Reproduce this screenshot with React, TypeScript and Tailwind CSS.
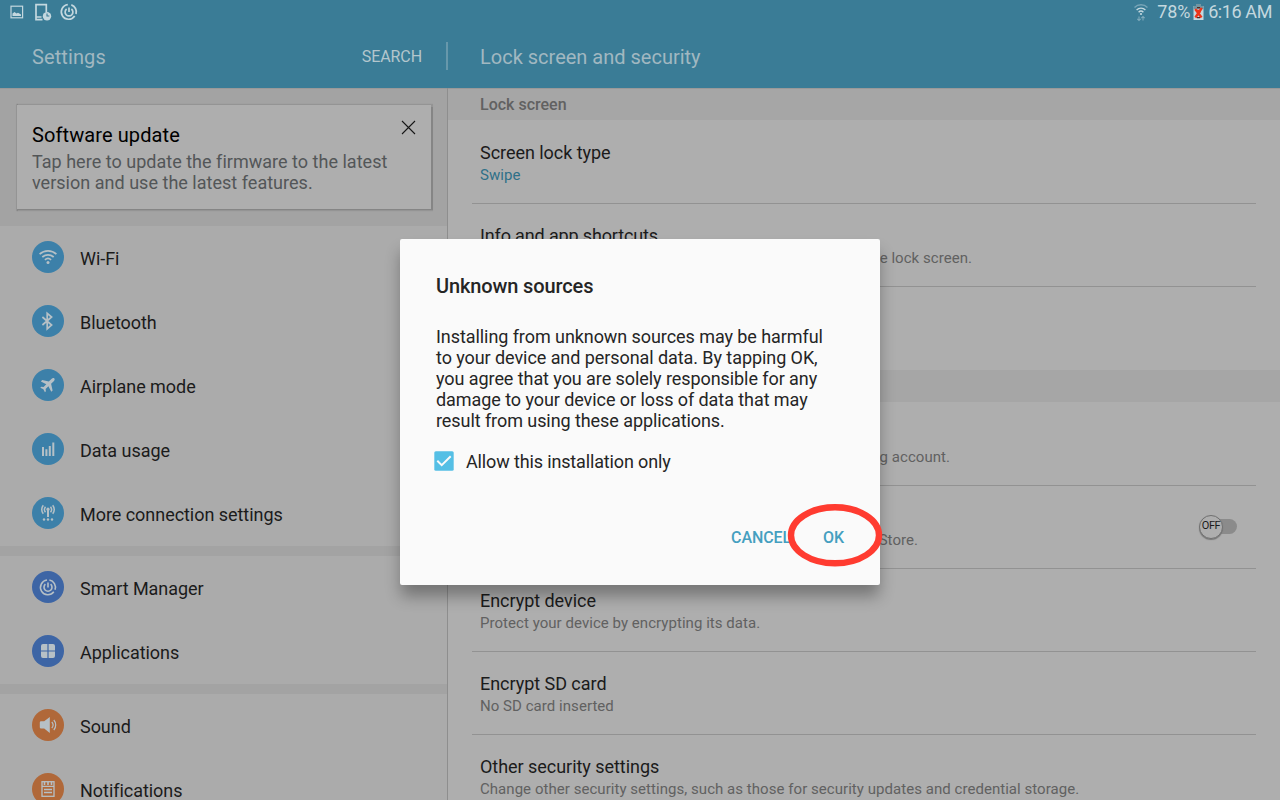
import React from "react";

type IconName = "wifi" | "bluetooth" | "plane" | "data" | "antenna" | "manager" | "apps" | "sound" | "notes";

function Glyph({ name }: { name: IconName }) {
  const line = { fill: "none", stroke: "#b6c0c6", strokeWidth: 1.7 };
  const solid = { fill: "#b6c0c6" };
  return (
    <svg width="32" height="32" viewBox="0 0 32 32">
      {name === "wifi" && (
        <g {...line}>
          <path d="M7.6 13.2a12.4 12.4 0 0 1 16.8 0M10.3 16a8.6 8.6 0 0 1 11.4 0M12.9 18.8a4.8 4.8 0 0 1 6.2 0" />
          <circle cx="16" cy="21.5" r="1.5" {...solid} stroke="none" />
        </g>
      )}
      {name === "bluetooth" && <path d="M10.4 12l9.2 8-4.4 3.8V8.3l4.4 3.7-9.2 8" {...line} />}
      {name === "plane" && (
        <path
          d="M22.2 9.2c-.8-.6-1.8-.2-2.5.5l-2.9 2.9-6.6-1.5-1.3 1.3 5.4 2.8-2.7 2.9-2.3-.4-1 1 3.1 1.5 1.5 3.1 1-1-.3-2.3 2.8-2.7 2.9 5.4 1.3-1.3-1.5-6.6 2.9-2.9c.7-.7 1-1.8.2-2.7Z"
          {...solid}
        />
      )}
      {name === "data" && (
        <path d="M10 14h2v9h-2zM13.4 16.3h2V23h-2zM16.8 13h2v10h-2zM20.3 9.5h2V23h-2z" {...solid} />
      )}
      {name === "antenna" && (
        <g {...line} strokeWidth="1.5">
          <path d="M11.3 8.3a7 7 0 0 0 0 8.4M20.7 8.3a7 7 0 0 1 0 8.4M13.5 9.7a4.5 4.5 0 0 0 0 5.6M18.5 9.7a4.5 4.5 0 0 1 0 5.6" />
          <path d="M16 12.5V20" strokeWidth="2" />
          <g {...solid} stroke="none">
            <circle cx="16" cy="12.2" r="1.6" />
            <circle cx="12" cy="22.5" r="1.2" />
            <circle cx="16" cy="22.5" r="1.2" />
            <circle cx="20" cy="22.5" r="1.2" />
          </g>
        </g>
      )}
      {name === "manager" && (
        <g {...line} strokeWidth="1.6">
          <path d="M15 9a7.4 7.4 0 1 0 6.8 11.8M23 18.7A7.4 7.4 0 0 0 17.4 9" />
          <path d="M13.4 13.2a4 4 0 1 0 5.2 0M16 11.5v5" />
        </g>
      )}
      {name === "apps" && (
        <g {...solid}>
          <path d="M11 9h4.4v6.4H9V11a2 2 0 0 1 2-2ZM16.6 9H21a2 2 0 0 1 2 2v4.4h-6.4zM9 16.6h6.4V23H11a2 2 0 0 1-2-2zM16.6 16.6H23V21a2 2 0 0 1-2 2h-4.4z" />
        </g>
      )}
      {name === "sound" && (
        <g {...line} strokeWidth="1.2">
          <path d="M9 12.2h3.2L17.8 8v16l-5.6-4.5H9a1.2 1.2 0 0 1-1.2-1.2v-4.9A1.2 1.2 0 0 1 9 12.2Z" {...solid} stroke="none" />
          <path d="M19.8 13a4.5 4.5 0 0 1 0 6M21.8 11a7.5 7.5 0 0 1 0 10" />
        </g>
      )}
      {name === "notes" && (
        <g {...line} strokeWidth="1.3">
          <rect x="10" y="8.7" width="12" height="14.6" />
          <path d="M10 13.3h12M12 16.5h8M12 19.5h8" />
          <path d="M12.5 9v3M16 9v3M19.5 9v3" strokeWidth="1.6" />
        </g>
      )}
    </svg>
  );
}

function MenuItem({ icon, color, label }: { icon: IconName; color: string; label: string }) {
  return (
    <div className="flex h-16 shrink-0 items-center pl-8">
      <div className={`mb-0.5 h-8 w-8 rounded-full ${color}`}>
        <Glyph name={icon} />
      </div>
      <span className="ml-4 mt-0.5 text-[18px] leading-6 tracking-[-0.04px] text-[#1b1b1b]">{label}</span>
    </div>
  );
}

function Gap() {
  return <div className="h-2.5 shrink-0 bg-[#a3a3a3]" />;
}

type SettingProps = {
  title?: string;
  titleClass?: string;
  detail?: string;
  detailClass?: string;
  last?: boolean;
  children?: React.ReactNode;
};

function Setting({
  title,
  titleClass = "tracking-[-0.04px]",
  detail,
  detailClass = "text-[#616161]",
  last,
  children,
}: SettingProps) {
  return (
    <div
      className={`ml-6 mr-6 flex h-[83px] shrink-0 items-center justify-between border-b pl-2 pr-[17px] ${
        last ? "border-transparent" : "border-[#929292]"
      }`}
    >
      <div className="pt-px">
        <div className={`h-6 whitespace-nowrap text-[18px] leading-6 text-[#1b1b1b] ${titleClass}`}>{title}</div>
        {detail && (
          <div className={`whitespace-nowrap text-[15px] leading-5 tracking-[0.045px] ${detailClass}`}>{detail}</div>
        )}
      </div>
      {children}
    </div>
  );
}

function StatusBar() {
  return (
    <div className="flex h-6 shrink-0 items-center justify-between pl-2 pr-2 text-[#c4d8df]">
      <svg width="76" height="24" viewBox="8 0 76 24" fill="none" stroke="#c4d8df">
        <rect x="11" y="6.2" width="11.6" height="11.6" strokeWidth="1.2" />
        <path d="M12.5 16v-2.6l2-1.4 2 1.6 1.5-.8 3 1.8V16z" fill="#c4d8df" stroke="none" />
        <path d="M46.3 12V4.6H36v15h6.5M36 17h5.5" strokeWidth="1.7" />
        <circle cx="47" cy="16.2" r="4.2" fill="#c4d8df" stroke="none" />
        <path d="M47 13.5V16h2.3" stroke="#3a7c96" strokeWidth="1.1" />
        <path d="M67.8 4.7a7.3 7.3 0 1 0 6.9 11.3M76 14a7.3 7.3 0 0 0-4.7-9.1" strokeWidth="1.7" />
        <path d="M66.6 9a3.9 3.9 0 1 0 4.8 0M69 7.5V12" strokeWidth="1.7" />
      </svg>
      <div className="flex items-center">
        <svg width="16" height="20" viewBox="0 0 16 20" fill="none" stroke="#c4d8df" strokeWidth="1.4">
          <path d="M1.5 5.5a9.2 9.2 0 0 1 13 0" opacity=".45" />
          <path d="M3.6 7.9a6.3 6.3 0 0 1 8.8 0M5.6 10.2a3.5 3.5 0 0 1 4.8 0" />
          <circle cx="8" cy="12" r="1.1" fill="#c4d8df" stroke="none" />
          <path d="M6 18.5v-4M4.3 16.8 6 18.5l1.7-1.7M10 14.5v4M8.3 16.2l1.7-1.7 1.7 1.7" opacity=".5" strokeWidth="1.1" />
        </svg>
        <span className="ml-2 text-[18px] leading-6 tracking-[-0.2px]">78%</span>
        <svg className="ml-[3px]" width="11" height="18" viewBox="0 0 11 18">
          <path d="M3 1h5v2h2.5v14H.5V3H3z" fill="#c4d8df" />
          <path d="M3 1h5v2h2.5v3H.5V3H3z" fill="#7296a2" />
          <path d="m2.2 6 6.3 8.5M8.8 5 2.4 14.5M3 7.5l5 1" stroke="#ed3418" strokeWidth="2.4" />
          <path d="M4 4.6h3M4 14.6h3" stroke="#542720" strokeWidth="1.2" />
        </svg>
        <span className="ml-1 text-[18px] leading-6 tracking-[-0.4px]">6:16 AM</span>
      </div>
    </div>
  );
}

function Dialog() {
  return (
    <div className="absolute left-[400px] top-[239px] flex h-[346px] w-[480px] flex-col rounded-[2px] bg-[#fafafa] px-9 pt-[34px] text-[#252525] shadow-[0_12px_16px_-1px_rgba(0,0,0,0.33)]">
      <h2 className="text-[20px] font-medium leading-[26px] tracking-[-0.12px]">Unknown sources</h2>
      <p className="mt-[27px] whitespace-nowrap text-[18px] leading-[21px] tracking-[-0.07px]">
        Installing from unknown sources may be harmful
        <br />
        to your device and personal data. By tapping OK,
        <br />
        you agree that you are solely responsible for any
        <br />
        damage to your device or loss of data that may
        <br />
        result from using these applications.
      </p>
      <label className="-ml-0.5 mt-[19px] flex h-6 items-center">
        <svg className="mb-[3px]" width="20" height="20" viewBox="0 0 20 20">
          <rect x=".3" y=".3" width="19.4" height="19.4" rx="1.5" fill="#55bfe5" />
          <path d="m3.3 9.8 4.4 4.3 9-8.8" fill="none" stroke="#fafafa" strokeWidth="2" />
        </svg>
        <span className="ml-3 text-[18px] leading-6 tracking-[-0.14px]">Allow this installation only</span>
      </label>
      <div className="mt-[52px] flex justify-end text-[16px] font-medium leading-6 tracking-[-0.1px] text-[#459fc0]">
        <span className="w-[92px]">CANCEL</span>
        <span>OK</span>
      </div>
      <svg className="absolute left-[386px] top-[263px]" width="98" height="66" viewBox="0 0 98 66">
        <ellipse cx="49" cy="33.3" rx="44" ry="28" fill="none" stroke="#ff3b30" strokeWidth="6.4" />
      </svg>
    </div>
  );
}

export default function App() {
  return (
    <div className="relative flex h-[800px] w-[1280px] flex-col overflow-hidden bg-[#aeaeae] font-[Roboto,sans-serif]">
      <header className="flex h-[88px] shrink-0 flex-col bg-[#3a7c96]">
        <StatusBar />
        <div className="flex h-16 items-center pb-0.5 text-[20px] text-[#a1b8c1]">
          <div className="flex w-[446px] items-center justify-between pl-8 pr-6">
            <span className="mt-1 tracking-[0.1px]">Settings</span>
            <span className="mt-1 text-[16px] tracking-[-0.08px] text-[#b3c6cd]">SEARCH</span>
          </div>
          <div className="mt-0.5 h-7 w-0.5 bg-[#6798ab]" />
          <span className="ml-8 mt-1">Lock screen and security</span>
        </div>
      </header>
      <div className="flex min-h-0 flex-1">
        <aside className="flex w-[448px] shrink-0 flex-col overflow-hidden border-r border-[#8e8e8e] bg-[#ababab]">
          <div className="h-[138px] shrink-0 border-t border-[#999999] bg-[#a3a3a3] pl-[17px] pr-4 pt-4">
            <div className="flex h-[104px] justify-between bg-[#aeaeae] pl-[15px] pr-[15px] pt-[18px] shadow-[0_0.5px_1px_1.5px_#858585]">
              <div>
                <div className="text-[20px] leading-6 tracking-[0.1px] text-black">Software update</div>
                <p className="mt-1 whitespace-nowrap text-[18px] leading-[21px] tracking-[0.02px] text-[#535658]">
                  Tap here to update the firmware to the latest
                  <br />
                  version and use the latest features.
                </p>
              </div>
              <svg className="-mt-[3px]" width="15" height="15" viewBox="0 0 15 15">
                <path d="m1 1 13 13M14 1 1 14" stroke="#161616" strokeWidth="1.1" />
              </svg>
            </div>
          </div>
          <MenuItem icon="wifi" color="bg-[#3c80a9]" label="Wi-Fi" />
          <MenuItem icon="bluetooth" color="bg-[#3c80a9]" label="Bluetooth" />
          <MenuItem icon="plane" color="bg-[#3c80a9]" label="Airplane mode" />
          <MenuItem icon="data" color="bg-[#3c80a9]" label="Data usage" />
          <MenuItem icon="antenna" color="bg-[#3c80a9]" label="More connection settings" />
          <Gap />
          <MenuItem icon="manager" color="bg-[#3d65a5]" label="Smart Manager" />
          <MenuItem icon="apps" color="bg-[#3d65a5]" label="Applications" />
          <Gap />
          <MenuItem icon="sound" color="bg-[#b06839]" label="Sound" />
          <MenuItem icon="notes" color="bg-[#b06839]" label="Notifications" />
        </aside>
        <main className="flex min-w-0 flex-1 flex-col overflow-hidden">
          <div className="flex h-8 shrink-0 items-center border-t border-[#999999] bg-[#a6a6a6] pl-8 text-[16px] font-medium text-[#616161]">
            Lock screen
          </div>
          <div className="h-px shrink-0" />
          <Setting title="Screen lock type" detail="Swipe" detailClass="text-[#2f7088]" />
          <Setting
            title="Info and app shortcuts"
            titleClass="tracking-[-0.14px]"
            detail="the lock screen."
            detailClass="w-[492px] text-right text-[#616161]"
          />
          <Setting last />
          <div className="h-8 shrink-0 bg-[#a6a6a6]" />
          <div className="h-px shrink-0" />
          <Setting detail="g account." detailClass="w-[470px] text-right text-[#616161]" />
          <Setting detail="Store." detailClass="w-[438px] text-right text-[#616161]">
            <div className="mb-px flex h-6 w-10 items-center">
              <div className="z-10 flex h-6 w-6 shrink-0 items-center justify-center rounded-full border border-[#707070] bg-[#aeaeae] text-[11px] tracking-[-0.4px] text-[#1b1b1b] shadow-[0_1px_1px_#777]">
                OFF
              </div>
              <div className="-ml-3 h-[15px] w-[26px] rounded-full bg-[#8b8b8b]" />
            </div>
          </Setting>
          <Setting title="Encrypt device" detail="Protect your device by encrypting its data." />
          <Setting title="Encrypt SD card" detail="No SD card inserted" />
          <Setting
            title="Other security settings"
            detail="Change other security settings, such as those for security updates and credential storage."
          />
        </main>
      </div>
      <Dialog />
    </div>
  );
}
